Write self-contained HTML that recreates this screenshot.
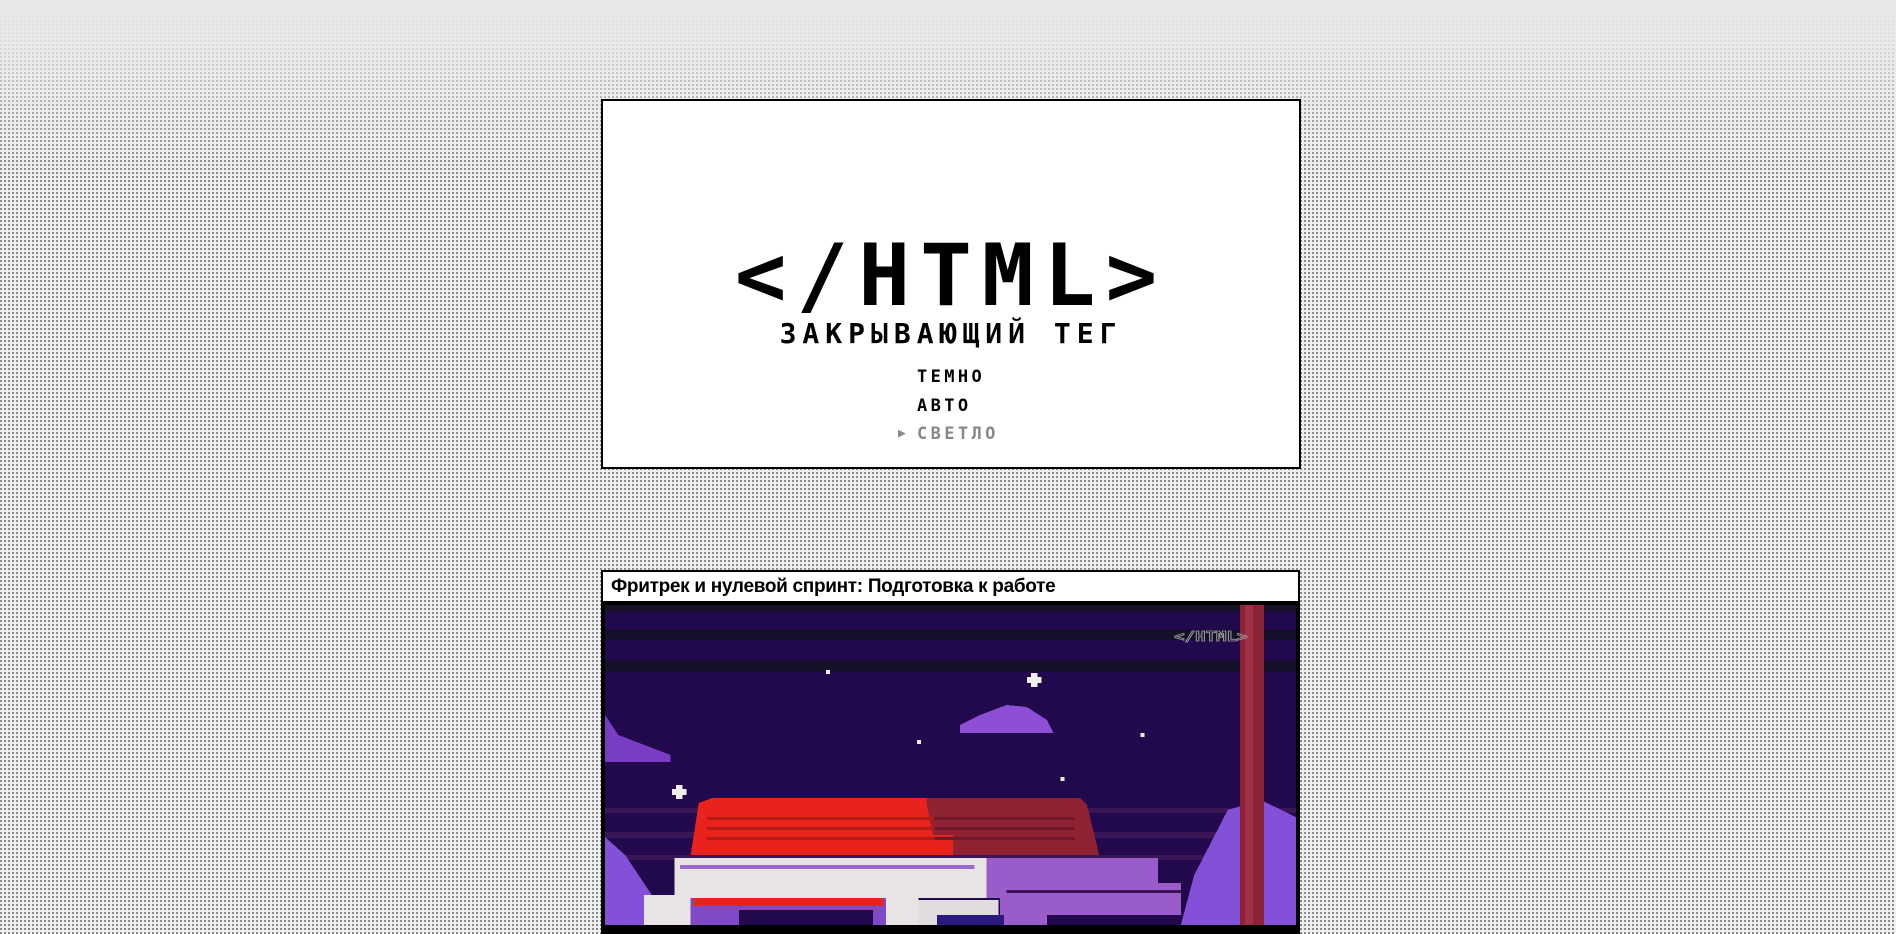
<!DOCTYPE html>
<html><head><meta charset="utf-8"><style>
html,body{margin:0;padding:0}
body{width:1896px;height:921px;overflow:hidden;position:relative;
background-color:#efefef;
background-image:linear-gradient(90deg,transparent 2px,#efefef 2px),linear-gradient(#8a8a8a 2px,#efefef 2px);
background-size:4px 4px,4px 4px;}
.fade{position:absolute;left:0;top:0;width:1896px;height:180px;background:linear-gradient(#e8e8e8 0%,rgba(232,232,232,0.85) 25%,rgba(232,232,232,0.3) 65%,rgba(232,232,232,0) 100%)}
.p1{position:absolute;left:601px;top:99px;width:696px;height:366px;border:2px solid #000;background:#fff}
.title{position:absolute;left:0;width:100%;top:219px;text-align:center;font-family:"DejaVu Sans Mono","Liberation Mono",monospace;font-weight:bold;font-size:86px;line-height:86px;letter-spacing:10px;color:#000}
.t{position:absolute;font-family:"DejaVu Sans Mono","Liberation Mono",monospace;font-weight:bold;color:#000}
.m{left:314px;font-size:17px;line-height:20px;letter-spacing:3.4px}
.p2{position:absolute;left:601px;top:570px;width:695px;height:360px;border:2px solid #000;background:#000}
.hd{position:absolute;left:0;top:0;width:695px;height:29px;background:#fff;font-family:"Liberation Sans",sans-serif;font-weight:bold;font-size:19px;line-height:29px;padding-left:8px;box-sizing:border-box;letter-spacing:-0.3px}
</style></head><body>
<div class="fade"></div>
<div class="p1">
<div class="title" style="top:132px">&lt;/HTML&gt;</div>
<div class="t" style="left:0;width:100%;text-align:center;top:218px;font-size:28px;line-height:30px;letter-spacing:6px">ЗАКРЫВАЮЩИЙ ТЕГ</div>
<div class="t m" style="top:266px">ТЕМНО</div>
<div class="t m" style="top:295px">АВТО</div>
<div class="t m" style="top:323px;color:#888">СВЕТЛО</div>
<div class="t" style="top:325px;left:295px;font-size:13px;color:#888">▶</div>
</div>
<div class="p2">
<div class="hd">Фритрек и нулевой спринт: Подготовка к работе</div>
<svg style="position:absolute;left:2px;top:33px" width="691" height="320" viewBox="0 0 516 320" preserveAspectRatio="none" shape-rendering="crispEdges">
<rect width="516" height="320" fill="#22084c"/>
<rect y="0" width="516" height="7" fill="#15102a"/>
<rect y="25" width="516" height="10" fill="#15102a"/>
<rect y="55" width="516" height="12" fill="#15102a"/>
<rect y="203" width="516" height="5" fill="#3a1656"/>
<rect y="227" width="516" height="6" fill="#3a1656"/>
<rect y="250" width="516" height="5" fill="#3a1656"/>
<path d="M0 110 L10 130 L49 150 L49 157 L0 157Z" fill="#7a3cc4"/>
<path d="M265 120 L280 110 L300 100 L315 102 L330 115 L335 128 L265 128Z" fill="#8e4fd6"/>
<path d="M0 232 L15 250 L40 300 L44 320 L0 320Z" fill="#8450d8"/>
<path d="M430 320 L440 270 L465 205 L490 195 L520 215 L520 320Z" fill="#8450d8"/>
<rect x="474" y="0" width="18" height="320" fill="#8b2436"/>
<rect x="478" y="0" width="6" height="320" fill="#a03048"/>
<path d="M70 198 L80 193 L240 193 L240 198 L260 198 L260 250 L64 250 Z" fill="#e8231b"/>
<path d="M240 193 L355 193 L360 200 L369 250 L260 250 L260 230 L245 230 L240 198Z" fill="#8e2232"/>
<rect x="76" y="212" width="170" height="3" fill="#b51a18"/><rect x="76" y="222" width="170" height="3" fill="#b51a18"/><rect x="76" y="232" width="170" height="3" fill="#b51a18"/>
<rect x="246" y="212" width="105" height="3" fill="#6e1828"/><rect x="246" y="222" width="105" height="3" fill="#6e1828"/><rect x="246" y="232" width="105" height="3" fill="#6e1828"/>
<rect x="52" y="253" width="233" height="40" fill="#e8e4e4"/>
<rect x="56" y="260" width="220" height="4" fill="#9a6ad0"/>
<rect x="285" y="253" width="128" height="40" fill="#9a5cc8"/>
<rect x="295" y="278" width="135" height="42" fill="#9a5cc8"/>
<rect x="300" y="285" width="130" height="3" fill="#3a1656"/>
<rect x="29" y="290" width="205" height="30" fill="#e8e4e4"/>
<rect x="64" y="293" width="146" height="27" fill="#7e4ac8"/>
<rect x="66" y="293" width="142" height="8" fill="#e8231b"/>
<rect x="100" y="305" width="100" height="15" fill="#22084c"/>
<rect x="234" y="295" width="60" height="25" fill="#e0dce0"/>
<rect x="248" y="310" width="50" height="10" fill="#2a1a80"/>
<rect x="330" y="310" width="100" height="10" fill="#22084c"/>
<g fill="#eee"><rect x="165" y="65" width="3" height="4"/><rect x="233" y="135" width="3" height="4"/><rect x="400" y="128" width="3" height="4"/><rect x="340" y="172" width="3" height="4"/>
<rect x="318" y="68" width="5" height="14"/><rect x="315" y="72" width="11" height="6"/>
<rect x="53" y="180" width="5" height="14"/><rect x="50" y="184" width="11" height="6"/></g>
<text x="425" y="36" font-family="DejaVu Sans Mono,monospace" font-weight="bold" font-size="13" fill="none" stroke="#9a9a9a" stroke-width="0.8">&lt;/HTML&gt;</text>
</svg>
</div>
</body></html>
